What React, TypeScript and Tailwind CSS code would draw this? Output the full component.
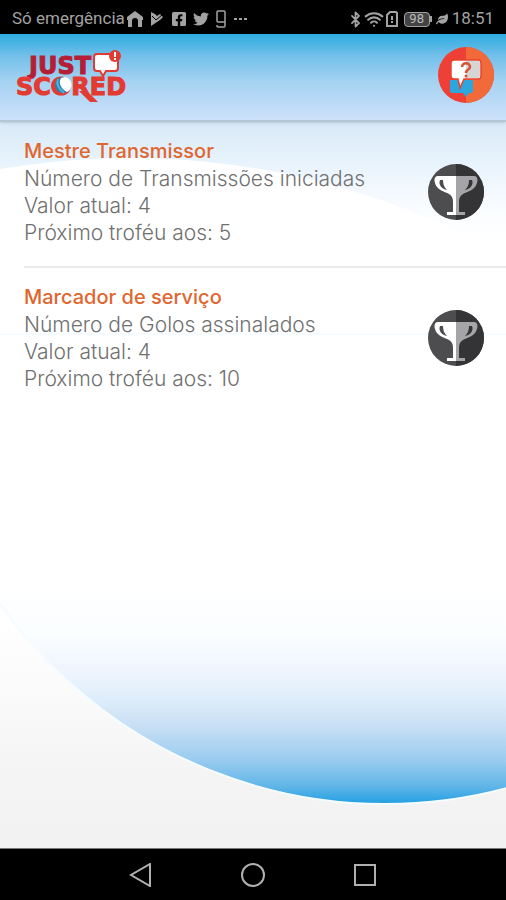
import { Bluetooth, Wifi } from "lucide-react";
import { FaFacebookSquare, FaLeaf, FaTwitter } from "react-icons/fa";

const trophies = [
  {
    title: "Mestre Transmissor",
    description: "Número de Transmissões iniciadas",
    current: 4,
    next: 5,
  },
  {
    title: "Marcador de serviço",
    description: "Número de Golos assinalados",
    current: 4,
    next: 10,
  },
];

function StatusBar() {
  return (
    <div className="flex h-[34px] shrink-0 items-center justify-between bg-black px-3 pt-1 font-['Roboto',sans-serif] text-[17px] text-[#a3a3a3]">
      <div className="flex items-center">
        <span>Só emergência</span>
        <svg className="ml-0.5 h-4 w-4" viewBox="0 0 16 16" fill="currentColor">
          <path d="M8 0 0 6v3h1v7h4v-6a3 3 0 0 1 6 0v6h4V9h1V6Z" />
        </svg>
        <svg className="ml-1.5 h-4 w-4" viewBox="0 0 16 16" fill="currentColor">
          <path d="M2 1 6 3l2 2 3-2 3 3-3 3-9 6Z" />
          <path d="m3 5 4 4 6-5" fill="none" stroke="#000" />
        </svg>
        <FaFacebookSquare className="ml-1.5 h-4 w-4" />
        <FaTwitter className="ml-1.5 h-4 w-4" />
        <svg className="ml-1.5 h-[18px] w-3" viewBox="0 0 12 18" fill="none" stroke="currentColor" strokeWidth="1.5">
          <path d="M10 12H3a1 1 0 0 1-1-1V2a1 1 0 0 1 1-1h6a1 1 0 0 1 1 1v14a1 1 0 0 1-1 1H3a1 1 0 0 1-1-1v-1" />
        </svg>
        <svg className="ml-1.5 h-4 w-4" viewBox="0 0 16 16" fill="currentColor">
          <path d="M1 7h3v2H1zM6 7h3v2H6zM11 7h3v2h-3z" />
        </svg>
      </div>
      <div className="flex items-center">
        <Bluetooth className="h-[17px] w-[17px]" strokeWidth={2.5} />
        <Wifi className="h-5 w-5" strokeWidth={2.5} />
        <svg className="ml-0.5 h-4 w-3" viewBox="0 0 12 16" fill="none" stroke="currentColor" strokeWidth="2">
          <path d="M4 1h6l1 1v13H1V4ZM6 5v4M6 10v2" />
        </svg>
        <span className="ml-1.5 flex h-[15px] w-[26px] items-center justify-center rounded-sm border border-[#a3a3a3] bg-[#444] text-[13px] text-[#bbb]">
          98
        </span>
        <span className="h-1.5 w-0.5 bg-[#a3a3a3]" />
        <FaLeaf className="ml-1 h-3 w-3" />
        <span className="ml-1">18:51</span>
      </div>
    </div>
  );
}

function Logo() {
  return (
    <svg className="h-[54px] w-[112px]" viewBox="0 0 112 54" role="img" aria-label="Just Scored">
      <text fontFamily="'DejaVu Sans'" fontWeight="700" fontSize="24">
        <tspan x="13" y="24" fill="#b51f35" stroke="#b51f35">JUST</tspan>
        <tspan x="0" y="45" fill="#e33a31" stroke="#e33a31">SCORED</tspan>
      </text>
      <path d="M63 41h8l11 11h-8Z" fill="#e33a31" />
      <circle cx="44" cy="36" r="9" fill="#e33a31" />
      <circle cx="47" cy="35" r="8" fill="#2f7fb0" />
      <path d="M49 27a8 8 0 0 1 2 15c-6-3-9-9-6-14Z" fill="#fff" />
      <path d="M42 29c-2 5 1 10 6 14" fill="none" stroke="#48b4e0" strokeWidth="2" />
      <path d="M81 4h18a3 3 0 0 1 3 3v11a3 3 0 0 1-3 3H90l-3 5-3-5h-3a3 3 0 0 1-3-3V7a3 3 0 0 1 3-3Z" fill="#fff" stroke="#e33a31" strokeWidth="2" />
      <circle cx="99" cy="6" r="6" fill="#e33a31" />
      <path d="M99 2v5M99 8v2" stroke="#fff" strokeWidth="2" />
    </svg>
  );
}

function HelpIcon() {
  return (
    <svg className="h-14 w-14" viewBox="0 0 56 56" aria-hidden="true">
      <circle cx="28" cy="28" r="28" fill="#ee4036" />
      <path d="M28 0a28 28 0 0 1 0 56Z" fill="#f26a3a" />
      <path d="M12 33h23v11c0 1-1 2-2 2h-2l-3 4-3-4H14c-1 0-2-1-2-2Z" fill="#2ba6de" />
      <path d="M16 13h24a3 3 0 0 1 3 3v13a3 3 0 0 1-3 3H26l-4 9-2-9h-4a3 3 0 0 1-3-3V16a3 3 0 0 1 3-3Z" fill="#fff" stroke="#e8432f" strokeWidth="1.5" />
      <path d="M28 14h12a2 2 0 0 1 2 2v13a2 2 0 0 1-2 2H28Z" fill="#d5d5d6" />
      <path d="M24 20c0-5 8-5 8 0 0 3-4 2-4 6" fill="none" stroke="#d9502e" strokeWidth="2.5" />
      <circle cx="28" cy="29" r="1.5" fill="#d9502e" />
    </svg>
  );
}

const HALF_CUP =
  "M28 12H10C5 12 6 19 9 23c3 4 9 5 12 7 3 2 4 4 4 8v10h-6v3h9ZM12 16h3c0 4 1 7 4 10-5-1-9-5-7-10Z";

function TrophyIcon() {
  return (
    <svg className="h-14 w-14 shrink-0" viewBox="0 0 56 56" aria-hidden="true">
      <circle cx="28" cy="28" r="28" fill="#4d4d4f" />
      <path d="M28 0a28 28 0 0 1 0 56Z" fill="#343436" />
      <path d={HALF_CUP} fill="#fff" fillRule="evenodd" />
      <path d={HALF_CUP} fill="#a5a5a7" fillRule="evenodd" transform="matrix(-1 0 0 1 56 0)" />
    </svg>
  );
}

function Backdrop() {
  return (
    <svg
      className="absolute inset-0 -z-10 h-full w-full"
      viewBox="0 0 506 726"
      preserveAspectRatio="none"
      aria-hidden="true"
    >
      <defs>
        <linearGradient id="sky" x1="0" y1="0" x2="0" y2="1">
          <stop offset="0" stopColor="#d8e9f6" />
          <stop offset="0.3" stopColor="#e6f2fc" />
          <stop offset="0.7" stopColor="#f9fcff" />
          <stop offset="1" stopColor="#fff" />
        </linearGradient>
        <linearGradient id="floor" x1="0" y1="0" x2="0" y2="1">
          <stop offset="0" stopColor="#fff" />
          <stop offset="0.7" stopColor="#f4f4f4" />
          <stop offset="1" stopColor="#f1f1f1" />
        </linearGradient>
        <linearGradient id="ball" gradientUnits="userSpaceOnUse" x1="0" y1="460" x2="0" y2="682">
          <stop offset="0" stopColor="#fff" />
          <stop offset="0.25" stopColor="#fafdff" />
          <stop offset="0.4" stopColor="#eff5fe" />
          <stop offset="0.53" stopColor="#deedfa" />
          <stop offset="0.65" stopColor="#c8dff5" />
          <stop offset="0.8" stopColor="#9accef" />
          <stop offset="0.92" stopColor="#60b5e7" />
          <stop offset="1" stopColor="#229fe2" />
        </linearGradient>
      </defs>
      <rect width="506" height="726" fill="#fff" />
      <rect width="506" height="120" fill="url(#sky)" />
      <circle cx="130" cy="806" r="770" fill="#fff" />
      <rect y="500" width="506" height="226" fill="url(#floor)" />
      <path d="M-85 212a470 470 0 0 0 940 0Z" fill="url(#ball)" stroke="#f4fcff" strokeWidth="2" />
    </svg>
  );
}

function NavBar() {
  return (
    <nav className="flex h-[52px] shrink-0 items-center justify-center gap-[88px] border-t border-[#777] bg-black text-[#b0b0b0]">
      <button type="button" aria-label="Voltar">
        <svg className="h-6 w-6" viewBox="0 0 24 24" fill="none" stroke="currentColor" strokeWidth="2">
          <path d="M21 1v22L2 12Z" />
        </svg>
      </button>
      <button type="button" aria-label="Início">
        <svg className="h-6 w-6" viewBox="0 0 24 24" fill="none" stroke="currentColor" strokeWidth="2">
          <circle cx="12" cy="12" r="11" />
        </svg>
      </button>
      <button type="button" aria-label="Recentes">
        <svg className="h-6 w-6" viewBox="0 0 24 24" fill="none" stroke="currentColor" strokeWidth="2">
          <path d="M2 2h20v20H2Z" />
        </svg>
      </button>
    </nav>
  );
}

export default function App() {
  return (
    <div className="flex min-h-screen flex-col bg-white">
      <StatusBar />

      <header className="z-10 flex h-[88px] shrink-0 items-center justify-between border-b-2 border-[#b3c7d5] bg-[linear-gradient(#2dace0,#72bfea_25%,#a5d2f2_55%,#cde1fa)] pl-4 pr-3 shadow-sm">
        <Logo />
        <button type="button" aria-label="Ajuda" className="-mt-1">
          <HelpIcon />
        </button>
      </header>

      <main className="relative isolate flex-1 overflow-hidden pl-6">
        <Backdrop />
        <ul>
          {trophies.map((trophy) => (
            <li
              key={trophy.title}
              className="flex items-center justify-between border-b-2 border-[#ebebeb] pt-4 pb-5 pr-[22px] last:border-b-0"
            >
              <div className="font-['Inter',sans-serif] text-[21px] leading-[27px] font-light text-[#707070]">
                <h2 className="text-[20px] font-medium text-[#e0662f]">{trophy.title}</h2>
                <p>{trophy.description}</p>
                <p>Valor atual: {trophy.current}</p>
                <p>Próximo troféu aos: {trophy.next}</p>
              </div>
              <TrophyIcon />
            </li>
          ))}
        </ul>
      </main>

      <NavBar />
    </div>
  );
}
